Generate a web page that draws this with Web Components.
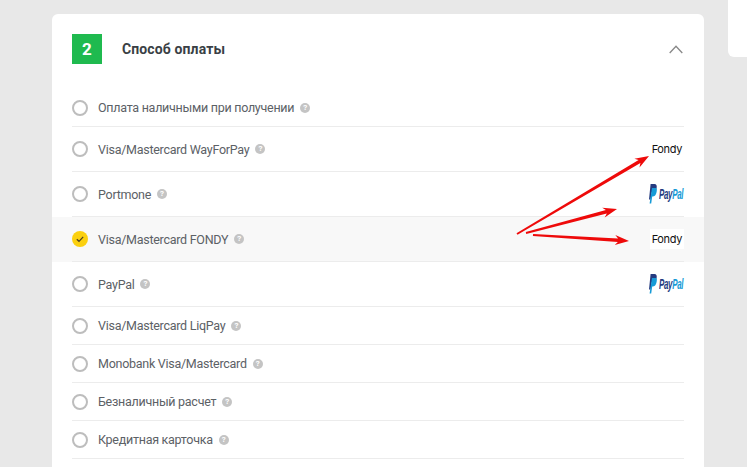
<!DOCTYPE html>
<html lang="ru">
<head>
<meta charset="utf-8">
<title>Способ оплаты</title>
<style>
    html, body { margin: 0; height: 100%; overflow: hidden; }
    body { background: #e8e8e8; font-family: Roboto, "Noto Sans", sans-serif; }
</style>
</head>
<body>
<checkout-page>
    <pay-card step="2" heading="Способ оплаты">
        <pay-option>Оплата наличными при получении</pay-option>
        <pay-option tall>Visa/Mastercard WayForPay<logo-fondy slot="logo"></logo-fondy></pay-option>
        <pay-option tall>Portmone<logo-paypal slot="logo"></logo-paypal></pay-option>
        <pay-option tall checked>Visa/Mastercard FONDY<logo-fondy slot="logo"></logo-fondy></pay-option>
        <pay-option tall>PayPal<logo-paypal slot="logo"></logo-paypal></pay-option>
        <pay-option>Visa/Mastercard LiqPay</pay-option>
        <pay-option>Monobank Visa/Mastercard</pay-option>
        <pay-option>Безналичный расчет</pay-option>
        <pay-option>Кредитная карточка</pay-option>
    </pay-card>
    <arrow-overlay slot="overlay"></arrow-overlay>
</checkout-page>

<script>
class CheckoutPage extends HTMLElement {
    connectedCallback() {
        this.attachShadow({ mode: 'open' });
        this.shadowRoot.innerHTML = `
            <style>
                :host {
                    display: flex;
                    align-items: flex-start;
                    gap: 24px;
                    position: relative;
                    height: 467px;
                    padding-left: 52px;
                    overflow: hidden;
                }
                .aside {
                    flex: none;
                    width: 60px;
                    height: 57px;
                    background: #fff;
                    border-bottom-left-radius: 6px;
                }
            </style>
            <slot></slot>
            <div class="aside"></div>
            <slot name="overlay"></slot>
        `;
    }
}
customElements.define('checkout-page', CheckoutPage);

class PayCard extends HTMLElement {
    connectedCallback() {
        this.attachShadow({ mode: 'open' });
        this.shadowRoot.innerHTML = `
            <style>
                :host {
                    display: block;
                    flex: none;
                    width: 612px;
                    margin-top: 14px;
                    padding: 20px 20px 40px;
                    background: #fff;
                    border-radius: 6px;
                }
                .head {
                    display: flex;
                    align-items: center;
                    height: 30px;
                    margin-bottom: 25px;
                }
                .step {
                    width: 30px;
                    height: 30px;
                    display: flex;
                    align-items: center;
                    justify-content: center;
                    background: #1fba4f;
                    color: #fff;
                    font-size: 17px;
                    font-weight: 700;
                }
                h2 {
                    flex: 1;
                    margin: 0 0 0 20px;
                    font-size: 14px;
                    font-weight: 700;
                    letter-spacing: .12px;
                    color: #3a3f45;
                }
                svg { display: block; margin-right: 1px; }
            </style>
            <div class="head">
                <div class="step">${this.getAttribute('step')}</div>
                <h2>${this.getAttribute('heading')}</h2>
                <svg width="14" height="9" viewBox="0 0 14 9" fill="none" stroke="#888" stroke-width="1.3">
                    <path d="M.7 8 7 1.3 13.3 8"/>
                </svg>
            </div>
            <slot></slot>
        `;
    }
}
customElements.define('pay-card', PayCard);

class PayOption extends HTMLElement {
    connectedCallback() {
        this.attachShadow({ mode: 'open' });
        const mark = this.hasAttribute('checked')
            ? `<svg class="radio" width="16" height="16" viewBox="0 0 16 16">
                   <circle cx="8" cy="8" r="8" fill="#fbd00f"/>
                   <path d="M4.8 8.2 7 10.3 11.2 5.8" fill="none" stroke="#4a4020" stroke-width="1.2"/>
               </svg>`
            : `<span class="radio empty"></span>`;
        this.shadowRoot.innerHTML = `
            <style>
                :host {
                    display: block;
                    margin: 0 -20px;
                    padding: 0 20px;
                }
                :host([checked]) { background: #f8f8f8; }
                .row {
                    display: flex;
                    align-items: center;
                    height: 37px;
                    border-bottom: 1px solid #ececec;
                    font-size: 12.5px;
                    letter-spacing: -.27px;
                    color: #5c6166;
                }
                :host([tall]) .row { height: 44px; }
                .radio { flex: none; width: 16px; height: 16px; margin-right: 10px; display: block; }
                .empty { box-sizing: border-box; border: 2px solid #bdbdbd; border-radius: 50%; background: #fff; }
                .help {
                    flex: none;
                    width: 10px;
                    height: 10px;
                    margin-left: 6px;
                    border-radius: 50%;
                    background: #c4c4c4;
                    color: #fff;
                    font-size: 8px;
                    font-weight: 700;
                    line-height: 10px;
                    text-align: center;
                    letter-spacing: 0;
                }
                .logo { margin-left: auto; display: flex; }
            </style>
            <div class="row">
                ${mark}
                <span><slot></slot></span>
                <span class="help">?</span>
                <span class="logo"><slot name="logo"></slot></span>
            </div>
        `;
    }
}
customElements.define('pay-option', PayOption);

class LogoFondy extends HTMLElement {
    connectedCallback() {
        this.attachShadow({ mode: 'open' });
        this.shadowRoot.innerHTML = `
            <style>
                :host {
                    display: flex;
                    align-items: center;
                    justify-content: flex-end;
                    width: 34px;
                    height: 20px;
                    padding-right: 2px;
                    box-sizing: border-box;
                    background: #fff;
                    font: 400 11px Inter, "Noto Sans", sans-serif;
                    letter-spacing: -.35px;
                    color: #111;
                }
            </style>
            Fondy
        `;
    }
}
customElements.define('logo-fondy', LogoFondy);

class LogoPaypal extends HTMLElement {
    connectedCallback() {
        this.attachShadow({ mode: 'open' });
        this.shadowRoot.innerHTML = `
            <style>
                :host {
                    display: flex;
                    align-items: center;
                    width: 35px;
                    height: 20px;
                }
                svg { flex: none; display: block; }
                span {
                    margin-left: 2px;
                    font: italic 700 14px "Liberation Sans", sans-serif;
                    letter-spacing: -.6px;
                    color: #253b80;
                    white-space: nowrap;
                    transform: scaleX(.57);
                    transform-origin: 0 50%;
                    width: 25px;
                }
                i { font-style: inherit; color: #179bd7; }
            </style>
            <svg width="8" height="20" viewBox="0 0 8 20">
                <path d="M1.6 0H5.4C7.4 0 8 1.6 7.7 3.6 7.3 6.6 6 8.4 3.6 8.4H2.6L1.6 15.6H0Z" fill="#253b80"/>
                <path d="M3 4H7C8 4.4 8 6 7.6 8 7 11 5.6 12.6 3.6 12.6H3.2L2.2 19.5H.6Z" fill="#179bd7"/>
            </svg>
            <span>Pay<i>Pal</i></span>
        `;
    }
}
customElements.define('logo-paypal', LogoPaypal);

class ArrowOverlay extends HTMLElement {
    connectedCallback() {
        this.attachShadow({ mode: 'open' });
        const arrow = (x1, y1, x2, y2) => {
            const a = Math.atan2(y2 - y1, x2 - x1);
            const pt = (back, side) => [
                x2 - back * Math.cos(a) - side * Math.sin(a),
                y2 - back * Math.sin(a) + side * Math.cos(a)
            ].map(n => n.toFixed(1)).join(',');
            const len = Math.hypot(x2 - x1, y2 - y1);
            return `<path d="M${pt(len, .9)} L${pt(11, 1.8)} L${pt(14, 5)} L${x2} ${y2} L${pt(14, -5)} L${pt(11, -1.8)} L${pt(len, -.9)} Z"/>`;
        };
        this.shadowRoot.innerHTML = `
            <style>
                :host { position: absolute; inset: 0; pointer-events: none; }
                svg { display: block; }
            </style>
            <svg width="747" height="467" fill="#ee0a0a">
                ${arrow(517, 234, 649, 156)}
                ${arrow(526, 233, 617, 209)}
                ${arrow(533, 235, 629, 241)}
            </svg>
        `;
    }
}
customElements.define('arrow-overlay', ArrowOverlay);
</script>
</body>
</html>
